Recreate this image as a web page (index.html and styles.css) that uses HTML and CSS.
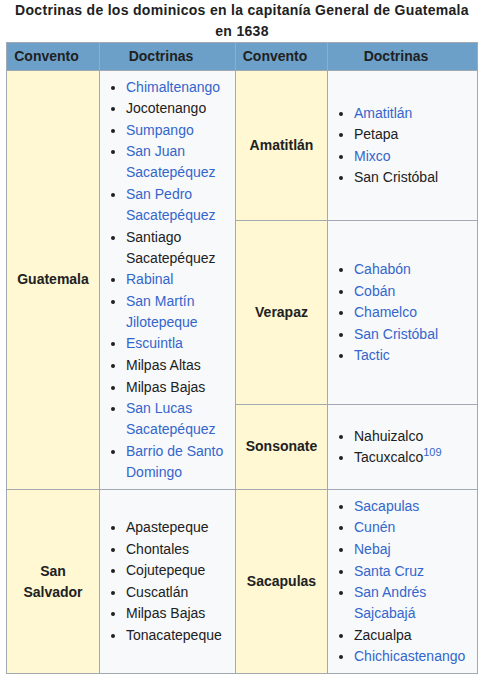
FILE: index.html
```html
<!DOCTYPE html>
<html lang="es">
<head>
<meta charset="utf-8">
<title>Doctrinas de los dominicos</title>
<link rel="stylesheet" href="styles.css">
</head>
<body>
<table class="wikitable">
  <caption>Doctrinas de los dominicos en la capitanía General de Guatemala en 1638</caption>
  <colgroup>
    <col class="c1"><col class="c2"><col class="c3"><col class="c4">
  </colgroup>
  <thead>
    <tr><th>Convento</th><th>Doctrinas</th><th>Convento</th><th>Doctrinas</th></tr>
  </thead>
  <tbody>
    <tr>
      <td class="conv" rowspan="3">Guatemala</td>
      <td class="doc" rowspan="3">
        <ul>
          <li><a href="#">Chimaltenango</a></li>
          <li>Jocotenango</li>
          <li><a href="#">Sumpango</a></li>
          <li><a href="#">San Juan Sacatepéquez</a></li>
          <li><a href="#">San Pedro Sacatepéquez</a></li>
          <li>Santiago Sacatepéquez</li>
          <li><a href="#">Rabinal</a></li>
          <li><a href="#">San Martín Jilotepeque</a></li>
          <li><a href="#">Escuintla</a></li>
          <li>Milpas Altas</li>
          <li>Milpas Bajas</li>
          <li><a href="#">San Lucas Sacatepéquez</a></li>
          <li><a href="#">Barrio de Santo Domingo</a></li>
        </ul>
      </td>
      <td class="conv">Amatitlán</td>
      <td class="doc">
        <ul>
          <li><a href="#">Amatitlán</a></li>
          <li>Petapa</li>
          <li><a href="#">Mixco</a></li>
          <li>San Cristóbal</li>
        </ul>
      </td>
    </tr>
    <tr>
      <td class="conv">Verapaz</td>
      <td class="doc">
        <ul>
          <li><a href="#">Cahabón</a></li>
          <li><a href="#">Cobán</a></li>
          <li><a href="#">Chamelco</a></li>
          <li><a href="#">San Cristóbal</a></li>
          <li><a href="#">Tactic</a></li>
        </ul>
      </td>
    </tr>
    <tr>
      <td class="conv">Sonsonate</td>
      <td class="doc">
        <ul>
          <li>Nahuizalco</li>
          <li>Tacuxcalco<sup class="ref"><a href="#">109</a></sup></li>
        </ul>
      </td>
    </tr>
    <tr>
      <td class="conv">San Salvador</td>
      <td class="doc">
        <ul>
          <li>Apastepeque</li>
          <li>Chontales</li>
          <li>Cojutepeque</li>
          <li>Cuscatlán</li>
          <li>Milpas Bajas</li>
          <li>Tonacatepeque</li>
        </ul>
      </td>
      <td class="conv">Sacapulas</td>
      <td class="doc">
        <ul>
          <li><a href="#">Sacapulas</a></li>
          <li><a href="#">Cunén</a></li>
          <li><a href="#">Nebaj</a></li>
          <li><a href="#">Santa Cruz</a></li>
          <li><a href="#">San Andrés Sajcabajá</a></li>
          <li>Zacualpa</li>
          <li><a href="#">Chichicastenango</a></li>
        </ul>
      </td>
    </tr>
  </tbody>
</table>
</body>
</html>
```

FILE: styles.css
```css
html, body {
  background: #ffffff;
}
body {
  margin: 0 0 0 6px;
  font-family: "Liberation Sans", Arial, sans-serif;
  font-size: 14px;
  line-height: 21px;
  color: #202122;
}
a {
  color: #3366cc;
  text-decoration: none;
}
.wikitable {
  border-collapse: collapse;
  table-layout: fixed;
  width: 471px;
  border: 1px solid #a2a9b1;
  background: #f8f9fa;
}
.wikitable caption {
  font-weight: bold;
  text-align: center;
  line-height: 21px;
  letter-spacing: 0.3px;
}
.c1 { width: 93px; }
.c2 { width: 136px; }
.c3 { width: 92px; }
.c4 { width: 150px; }
.wikitable th,
.wikitable td {
  border: 1px solid #a2a9b1;
  padding: 3px 5.6px;
}
.wikitable th {
  background: #6ca0c8;
  font-weight: bold;
  text-align: center;
  padding: 2.8px 18.6px 2.8px 5.6px;
}
.conv {
  background: #fff8d2;
  font-weight: bold;
  text-align: center;
  vertical-align: middle;
}
.doc {
  background: #f8f9fa;
  vertical-align: middle;
}
.doc ul {
  margin: 3px 0 3px 20.4px;
  padding: 0;
  list-style: disc;
}
.doc li {
  margin-bottom: 0.6px;
}
.ref {
  font-size: 11px;
  line-height: 1;
  vertical-align: super;
}
```
